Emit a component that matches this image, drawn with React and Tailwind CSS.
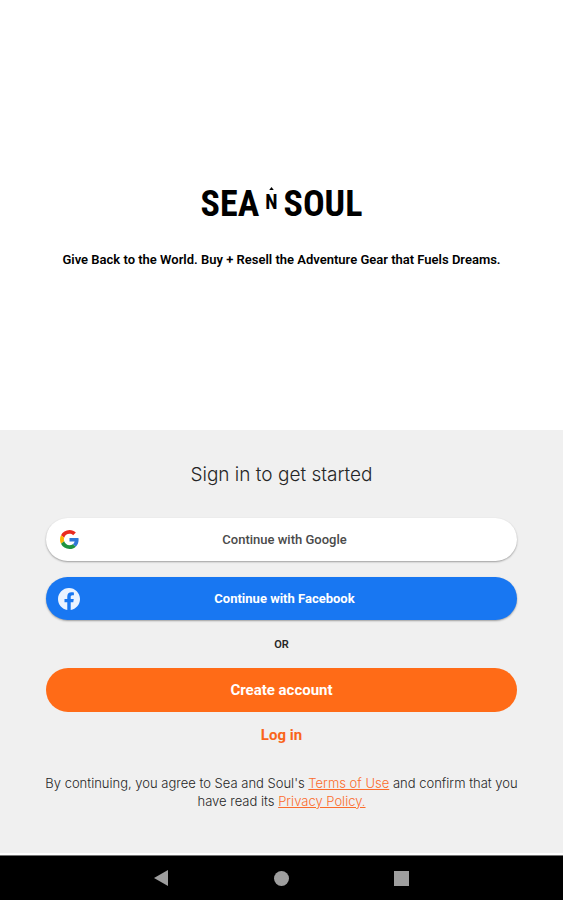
import React from "react";

function GoogleIcon() {
  return (
    <svg viewBox="0 0 48 48" className="size-[19px]" aria-hidden="true">
      <path
        fill="#EA2A1F"
        d="M24 9.5c3.54 0 6.71 1.22 9.21 3.6l6.85-6.85C35.9 2.38 30.47 0 24 0 14.62 0 6.51 5.38 2.56 13.22l7.98 6.19C12.43 13.72 17.74 9.5 24 9.5z"
      />
      <path
        fill="#2F78D8"
        d="M46.98 24.55c0-1.57-.15-3.09-.38-4.55H24v9.02h12.94c-.58 2.96-2.26 5.48-4.78 7.18l7.73 6c4.51-4.18 7.09-10.36 7.09-17.65z"
      />
      <path
        fill="#FBB605"
        d="M10.53 28.59c-.48-1.45-.76-2.99-.76-4.59s.27-3.14.76-4.59l-7.98-6.19C.92 16.46 0 20.12 0 24c0 3.88.92 7.54 2.56 10.78l7.97-6.19z"
      />
      <path
        fill="#1E9440"
        d="M24 48c6.48 0 11.93-2.13 15.89-5.81l-7.73-6c-2.15 1.45-4.92 2.3-8.16 2.3-6.26 0-11.57-4.22-13.47-9.91l-7.98 6.19C6.51 42.62 14.62 48 24 48z"
      />
    </svg>
  );
}

function FacebookIcon() {
  return (
    <svg viewBox="0 0 24 24" className="size-[22px]" aria-hidden="true">
      <path
        fill="#eaf3ff"
        d="M24 12.07C24 5.41 18.63 0 12 0S0 5.4 0 12.07C0 18.1 4.39 23.1 10.13 24v-8.44H7.08v-3.49h3.04V9.41c0-3.02 1.8-4.7 4.54-4.7 1.31 0 2.68.24 2.68.24v2.97h-1.5c-1.5 0-1.96.93-1.96 1.89v2.26h3.32l-.53 3.5h-2.8V24C19.62 23.1 24 18.1 24 12.07z"
      />
    </svg>
  );
}

function Logo() {
  return (
    <h1 className="flex items-center justify-center gap-[6px] font-['Roboto_Condensed','Liberation_Sans_Narrow',Roboto,sans-serif] text-[36px] leading-[48px] font-bold text-black">
      <span>SEA</span>
      <span className="flex flex-col items-center pb-2 text-[20px] leading-6">
        <svg viewBox="0 0 6 4" className="h-[3px] w-[5px]" aria-hidden="true">
          <path d="M3 0l3 4H0z" />
        </svg>
        N
      </span>
      <span>SOUL</span>
    </h1>
  );
}

function SocialButton({ icon, className, children }) {
  return (
    <button
      type="button"
      className={`grid h-[43px] w-full grid-cols-[22px_1fr] items-center rounded-full pr-7 pl-3 text-[13px] shadow-[0_1px_2px_rgba(0,0,0,0.35)] ${className}`}
    >
      <span className="flex justify-center">{icon}</span>
      <span>{children}</span>
    </button>
  );
}

function NavBar() {
  return (
    <nav className="flex h-[45px] items-center justify-center gap-[105px] border-t border-neutral-500 bg-black">
      <button type="button" aria-label="Back">
        <svg viewBox="0 0 15 16" className="h-4 w-[15px] fill-[#9e9e9e]" aria-hidden="true">
          <path d="M14 0v16L0 8z" />
        </svg>
      </button>
      <button type="button" aria-label="Home" className="size-[15px] rounded-full bg-[#9e9e9e]" />
      <button type="button" aria-label="Recent apps" className="size-[15px] bg-[#9e9e9e]" />
    </nav>
  );
}

function App() {
  return (
    <div className="flex min-h-screen flex-col bg-white font-[Roboto,sans-serif]">
      <header className="flex flex-1 flex-col items-center justify-center gap-[22px] px-6 pt-5 text-center">
        <Logo />
        <p className="text-[13px] leading-5 font-semibold text-black">
          Give Back to the World. Buy + Resell the Adventure Gear that Fuels Dreams.
        </p>
      </header>

      <main className="flex flex-col items-center bg-[#f0f0f0] px-10 pt-8 pb-[43px] text-center">
        <h2 className="font-[Inter,sans-serif] text-[19px] leading-[26px] font-light text-neutral-800">
          Sign in to get started
        </h2>

        <div className="flex w-full flex-col items-center px-[6px] pt-[30px]">
          <div className="flex w-full flex-col gap-4">
            <SocialButton icon={<GoogleIcon />} className="bg-white font-medium text-[#4a4a4a]">
              Continue with Google
            </SocialButton>
            <SocialButton icon={<FacebookIcon />} className="bg-[#1877f2] font-bold text-white">
              Continue with Facebook
            </SocialButton>
          </div>

          <p className="mt-4 text-[11px] leading-[18px] font-semibold text-neutral-800">OR</p>

          <button
            type="button"
            className="mt-[14px] h-11 w-full rounded-full bg-[#ff6b17] text-[15px] font-bold text-white"
          >
            Create account
          </button>
          <a href="#login" className="mt-3 text-[15px] leading-[22px] font-bold text-[#f9651a]">
            Log in
          </a>
        </div>

        <p className="mt-7 font-[Inter,sans-serif] text-[13px] leading-[18px] font-light text-neutral-800">
          By continuing, you agree to Sea and Soul's{" "}
          <a href="#terms" className="text-[#fb6c2c] underline">
            Terms of Use
          </a>{" "}
          and confirm that you have read its{" "}
          <a href="#privacy" className="text-[#fb6c2c] underline">
            Privacy Policy.
          </a>
        </p>
      </main>

      <div className="h-[2px] bg-white" />
      <NavBar />
    </div>
  );
}

export default App;
